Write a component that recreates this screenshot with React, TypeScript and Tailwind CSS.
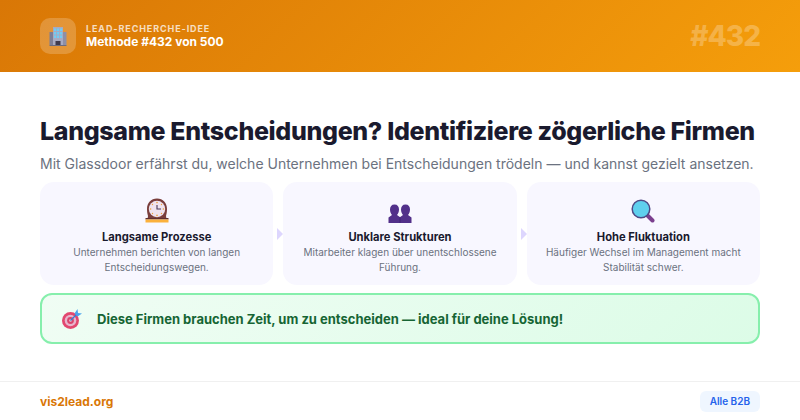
function ClockIcon() {
  return (
    <svg width="24" height="25" viewBox="0 0 24 25">
      <path d="M2.5 21 L3 18 C2.5 16 2 14 2 11 C2 5 6 0.5 12 0.5 C18 0.5 22 5 22 11 C22 14 21.5 16 21 18 L21.5 21 Z" fill="#7a3e3c" />
      <rect x="0.5" y="20" width="23" height="1.5" fill="#5f2f30" />
      <rect x="0.5" y="21.5" width="23" height="3" fill="#fbb13c" />
      <circle cx="12" cy="11" r="8.2" fill="#efe3ee" />
      <g fill="#f0a13a">
        <circle cx="12" cy="4.6" r="0.8" />
        <circle cx="12" cy="17.4" r="0.8" />
        <circle cx="5.6" cy="11" r="0.8" />
        <circle cx="18.4" cy="11" r="0.8" />
        <circle cx="7.5" cy="6.5" r="0.7" />
        <circle cx="16.5" cy="6.5" r="0.7" />
        <circle cx="7.5" cy="15.5" r="0.7" />
        <circle cx="16.5" cy="15.5" r="0.7" />
      </g>
      <path d="M12 7 V11 H16" fill="none" stroke="#4a3a5a" strokeWidth="1.1" />
    </svg>
  );
}

function PeopleIcon() {
  return (
    <svg width="24" height="24" viewBox="0 0 24 24">
      <g fill="#52308a">
        <path d="M6.5 5.5 C9.5 5.5 11 7.5 11 10.5 C11 13 10 15 9 16 L12.5 18.5 V24 H0.5 V18.5 L4 16 C3 15 2 13 2 10.5 C2 7.5 3.5 5.5 6.5 5.5 Z" />
        <path d="M17.5 5.5 C20.5 5.5 22 7.5 22 10.5 C22 13 21 15 20 16 L23.5 18.5 V24 H11.5 V18.5 L15 16 C14 15 13 13 13 10.5 C13 7.5 14.5 5.5 17.5 5.5 Z" />
      </g>
      <path d="M12 18.5 V24" stroke="#3d2270" strokeWidth="0.8" />
    </svg>
  );
}

function SearchIcon() {
  return (
    <svg width="24" height="24" viewBox="0 0 24 24">
      <path d="M16.5 16.5 L21.5 21.5" stroke="#7b3f8e" strokeWidth="4" strokeLinecap="round" />
      <circle cx="10" cy="10" r="8.8" fill="#5fd0ee" stroke="#4f4a86" strokeWidth="1.5" />
    </svg>
  );
}

function BuildingIcon() {
  return (
    <svg width="18" height="20" viewBox="0 0 18 20">
      <rect x="0.5" y="6" width="4" height="13" fill="#7d7f96" />
      <rect x="13.5" y="6" width="4" height="13" fill="#8d8fa6" />
      <rect x="4" y="1" width="10" height="18" fill="#a8aac0" />
      <g fill="#6fcdf5">
        <rect x="5" y="2.5" width="2.2" height="2.5" />
        <rect x="8" y="2.5" width="2.2" height="2.5" />
        <rect x="11" y="2.5" width="2.2" height="2.5" />
        <rect x="5" y="6" width="2.2" height="2.5" />
        <rect x="8" y="6" width="2.2" height="2.5" />
        <rect x="11" y="6" width="2.2" height="2.5" />
        <rect x="5" y="9.5" width="2.2" height="2.5" />
        <rect x="8" y="9.5" width="2.2" height="2.5" />
        <rect x="11" y="9.5" width="2.2" height="2.5" />
      </g>
      <rect x="6.5" y="15" width="5" height="4" fill="#3f3a4c" />
      <rect x="0.5" y="19" width="17" height="1" fill="#6b6c80" />
    </svg>
  );
}

function TargetIcon() {
  return (
    <svg width="20" height="20" viewBox="0 0 20 20">
      <circle cx="8.5" cy="11.5" r="8.5" fill="#e2476f" />
      <circle cx="8.5" cy="11.5" r="5.8" fill="#e8b4cc" />
      <circle cx="8.5" cy="11.5" r="3.4" fill="#d9456d" />
      <circle cx="8.5" cy="11.5" r="1.3" fill="#efc0d2" />
      <path d="M8.5 11.5 L15 5" stroke="#2f7fd6" strokeWidth="1.3" />
      <path d="M12.5 4.5 L15.5 0 L16 4 L20 4.5 L15.5 7.5 Z" fill="#4aa3ee" />
    </svg>
  );
}

const steps = [
  { icon: <ClockIcon />, title: 'Langsame Prozesse', text: 'Unternehmen berichten von langen Entscheidungswegen.' },
  { icon: <PeopleIcon />, title: 'Unklare Strukturen', text: 'Mitarbeiter klagen über unentschlossene Führung.' },
  { icon: <SearchIcon />, title: 'Hohe Fluktuation', text: 'Häufiger Wechsel im Management macht Stabilität schwer.' },
];

export default function App() {
  return (
    <div className="flex h-[420px] w-[800px] flex-col overflow-hidden bg-white font-['Inter',sans-serif]">
      <header className="flex h-[72px] shrink-0 items-center justify-between bg-[linear-gradient(135deg,#d97706,#f59e0b)] px-10">
        <div className="flex items-center gap-2.5">
          <div className="flex h-9 w-9 items-center justify-center rounded-[10px] bg-white/20">
            <BuildingIcon />
          </div>
          <div>
            <div className="text-[9px] leading-[11px] font-bold tracking-[0.9px] text-white/75">LEAD-RECHERCHE-IDEE</div>
            <div className="text-xs leading-[16px] font-bold text-white">Methode #432 von 500</div>
          </div>
        </div>
        <div className="text-[28px] font-extrabold tracking-[-1px] text-white/25">#432</div>
      </header>

      <main className="flex flex-1 flex-col px-10 pt-11">
        <h1 className="text-[25px] leading-[30px] font-extrabold tracking-[-0.34px] text-[#1a1a2e]">Langsame Entscheidungen? Identifiziere zögerliche Firmen</h1>
        <p className="mt-2 text-sm leading-[20px] text-[#6b7280]">
          Mit Glassdoor erfährst du, welche Unternehmen bei Entscheidungen trödeln — und kannst gezielt ansetzen.
        </p>

        <div className="mt-2 grid grid-cols-3 gap-2.5">
          {steps.map((step, i) => (
            <div key={step.title} className="relative flex h-[103px] flex-col items-center rounded-[14px] bg-[#f8f7ff] px-3 pt-4 text-center">
              <div className="flex h-[25px] items-end">{step.icon}</div>
              <div className="mt-[7px] text-[11.2px] leading-[14px] font-bold text-[#1a1a2e]">{step.title}</div>
              <div className="mt-px text-[10px] leading-[15px] text-[#6b7280]">{step.text}</div>
              {i < 2 && (
                <div className="absolute top-1/2 -right-[10px] z-10 h-0 w-0 -translate-y-1/2 border-y-[6px] border-l-[6px] border-y-transparent border-l-[#ddd6fe]" />
              )}
            </div>
          ))}
        </div>

        <div className="mt-2 flex h-[51px] items-center gap-[15px] rounded-xl border-2 border-[#86efac] bg-[linear-gradient(135deg,#f0fdf4,#dcfce7)] px-5">
          <TargetIcon />
          <span className="pt-0.5 text-[13px] font-bold text-[#166534]">Diese Firmen brauchen Zeit, um zu entscheiden — ideal für deine Lösung!</span>
        </div>
      </main>

      <footer className="flex h-[39px] shrink-0 items-center justify-between border-t border-[#f0f0f0] px-10">
        <span className="pt-0.5 text-xs font-bold text-[#d97706]">vis2lead.org</span>
        <span className="rounded-md bg-[#eff6ff] px-2.5 py-[3px] text-[10px] font-semibold text-[#2563eb]">Alle B2B</span>
      </footer>
    </div>
  );
}
